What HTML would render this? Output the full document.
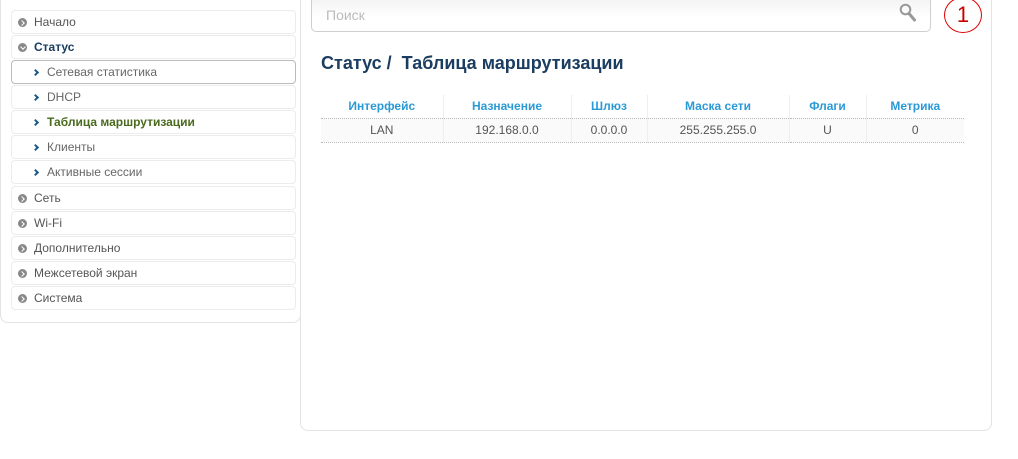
<!DOCTYPE html>
<html><head><meta charset="utf-8"><style>
*{box-sizing:border-box;margin:0;padding:0}
body{width:1018px;height:459px;background:#fff;font-family:"Liberation Sans",Arial,sans-serif;position:relative;overflow:hidden}
.lp{position:absolute;left:0;top:-10px;width:301px;height:333px;border:1px solid #e3e3e3;border-radius:8px}
.rp{position:absolute;left:300px;top:-10px;width:692px;height:441px;border:1px solid #e3e3e3;border-radius:8px;background:#fff}
.it{position:absolute;left:11px;width:285px;height:24px;border:1px solid #ececec;border-radius:4px;font-size:12px;color:#555;line-height:23px;padding-left:22px}
.it .b{position:absolute;left:6px;top:7px;width:9px;height:9px;border-radius:50%;background:#888}
.it .b:after{content:"";position:absolute;left:2px;top:2.5px;width:3px;height:3px;border-right:1.3px solid #fff;border-top:1.3px solid #fff;transform:rotate(45deg)}
.it.op .b:after{left:2.5px;top:1.5px;transform:rotate(135deg)}
.sub{padding-left:35px;color:#666}
.sub:before{content:"";position:absolute;left:21px;top:9px;width:3px;height:3px;border-right:2px solid #1a5b8a;border-top:2px solid #1a5b8a;transform:rotate(45deg)}
.search{position:absolute;left:311px;top:-4px;width:620px;height:36px;border:1px solid #cfcfcf;border-radius:5px;background:linear-gradient(#f2f2f2,#fff 60%);font-size:14px;color:#bbb;padding:10px 0 0 14px}
.mag{position:absolute;left:899px;top:3px}
.circ{position:absolute;left:944px;top:-3px;width:38px;height:36px;border:1.3px solid #d00;border-radius:50%;color:#c00;font-size:22px;text-align:center;line-height:34px}
h1{position:absolute;left:321px;top:53px;font-size:18px;color:#1b3d60;font-weight:bold}
table{position:absolute;left:321px;top:95px;width:643px;border-collapse:collapse;font-size:12px}
th{color:#2a9ad6;font-weight:bold;height:23px;border-left:1px solid #eee;border-bottom:1px dotted #bbb}
td{color:#555;text-align:center;height:24px;border-left:1px solid #eee;border-bottom:1px dotted #bbb;background:#fafafa}
th:first-child,td:first-child{border-left:none}
</style></head><body>
<div class="lp"></div>
<div class="rp"></div>
<div class="it" style="top:10px"><span class="b"></span>Начало</div>
<div class="it op" style="top:35px;color:#1b3d60;font-weight:bold"><span class="b"></span>Статус</div>
<div class="it sub" style="top:60px;border-color:#bbb">Сетевая статистика</div>
<div class="it sub" style="top:85px">DHCP</div>
<div class="it sub" style="top:110px;color:#4a6a1e;font-weight:bold">Таблица маршрутизации</div>
<div class="it sub" style="top:135px">Клиенты</div>
<div class="it sub" style="top:160px">Активные сессии</div>
<div class="it" style="top:186px"><span class="b"></span>Сеть</div>
<div class="it" style="top:211px"><span class="b"></span>Wi-Fi</div>
<div class="it" style="top:236px"><span class="b"></span>Дополнительно</div>
<div class="it" style="top:261px"><span class="b"></span>Межсетевой экран</div>
<div class="it" style="top:286px"><span class="b"></span>Система</div>
<div class="search">Поиск</div>
<svg class="mag" width="18" height="20" viewBox="0 0 18 20"><circle cx="6.5" cy="6.5" r="4.8" fill="none" stroke="#999" stroke-width="2"/><line x1="10" y1="10.5" x2="15.5" y2="17" stroke="#999" stroke-width="3" stroke-linecap="round"/></svg>
<div class="circ">1</div>
<h1>Статус /&nbsp; Таблица маршрутизации</h1>
<table>
<tr><th style="width:122px">Интерфейс</th><th style="width:128px">Назначение</th><th style="width:76px">Шлюз</th><th style="width:142px">Маска сети</th><th style="width:77px">Флаги</th><th>Метрика</th></tr>
<tr><td>LAN</td><td>192.168.0.0</td><td>0.0.0.0</td><td>255.255.255.0</td><td>U</td><td>0</td></tr>
</table>
</body></html>
